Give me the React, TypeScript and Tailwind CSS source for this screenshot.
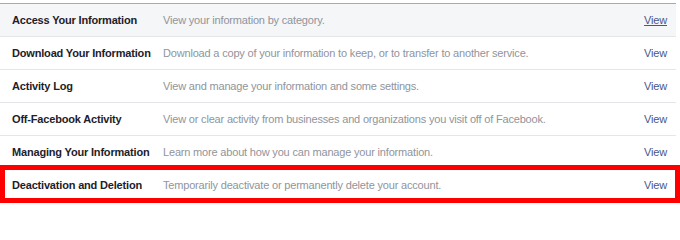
import React from "react";

const rows = [
  { t: "Access Your Information", d: "View your information by category.", hover: true },
  { t: "Download Your Information", d: "Download a copy of your information to keep, or to transfer to another service." },
  { t: "Activity Log", d: "View and manage your information and some settings." },
  { t: "Off-Facebook Activity", d: "View or clear activity from businesses and organizations you visit off of Facebook." },
  { t: "Managing Your Information", d: "Learn more about how you can manage your information." },
  { t: "Deactivation and Deletion", d: "Temporarily deactivate or permanently delete your account." },
];

export default function App() {
  return (
    <div
      className="relative w-[680px] h-[204px] bg-white overflow-hidden"
      style={{ fontFamily: '"Liberation Sans", Arial, sans-serif' }}
    >
      <div className="pt-[3px] w-[676px]">
        <div className="border-t border-[#a7a9ad]">
          {rows.map((r, i) => (
            <div
              key={i}
              className={`flex items-center h-[33px] border-b border-[#e5e6e9] text-[11px] tracking-[-0.18px] ${
                r.hover ? "bg-[#f5f6f7]" : "bg-white"
              }`}
            >
              <div className="pl-3 w-[163px] shrink-0 font-bold text-[#1d2129] whitespace-nowrap">{r.t}</div>
              <div className="flex-1 text-[#90949c] whitespace-nowrap">{r.d}</div>
              <div className={`pr-[9px] text-[#4b5688] ${r.hover ? "underline" : ""}`}>View</div>
            </div>
          ))}
        </div>
      </div>
      <div className="absolute left-0 top-[165px] w-[680px] h-[38px] border-[5px] border-[#ff0000]" />
    </div>
  );
}
